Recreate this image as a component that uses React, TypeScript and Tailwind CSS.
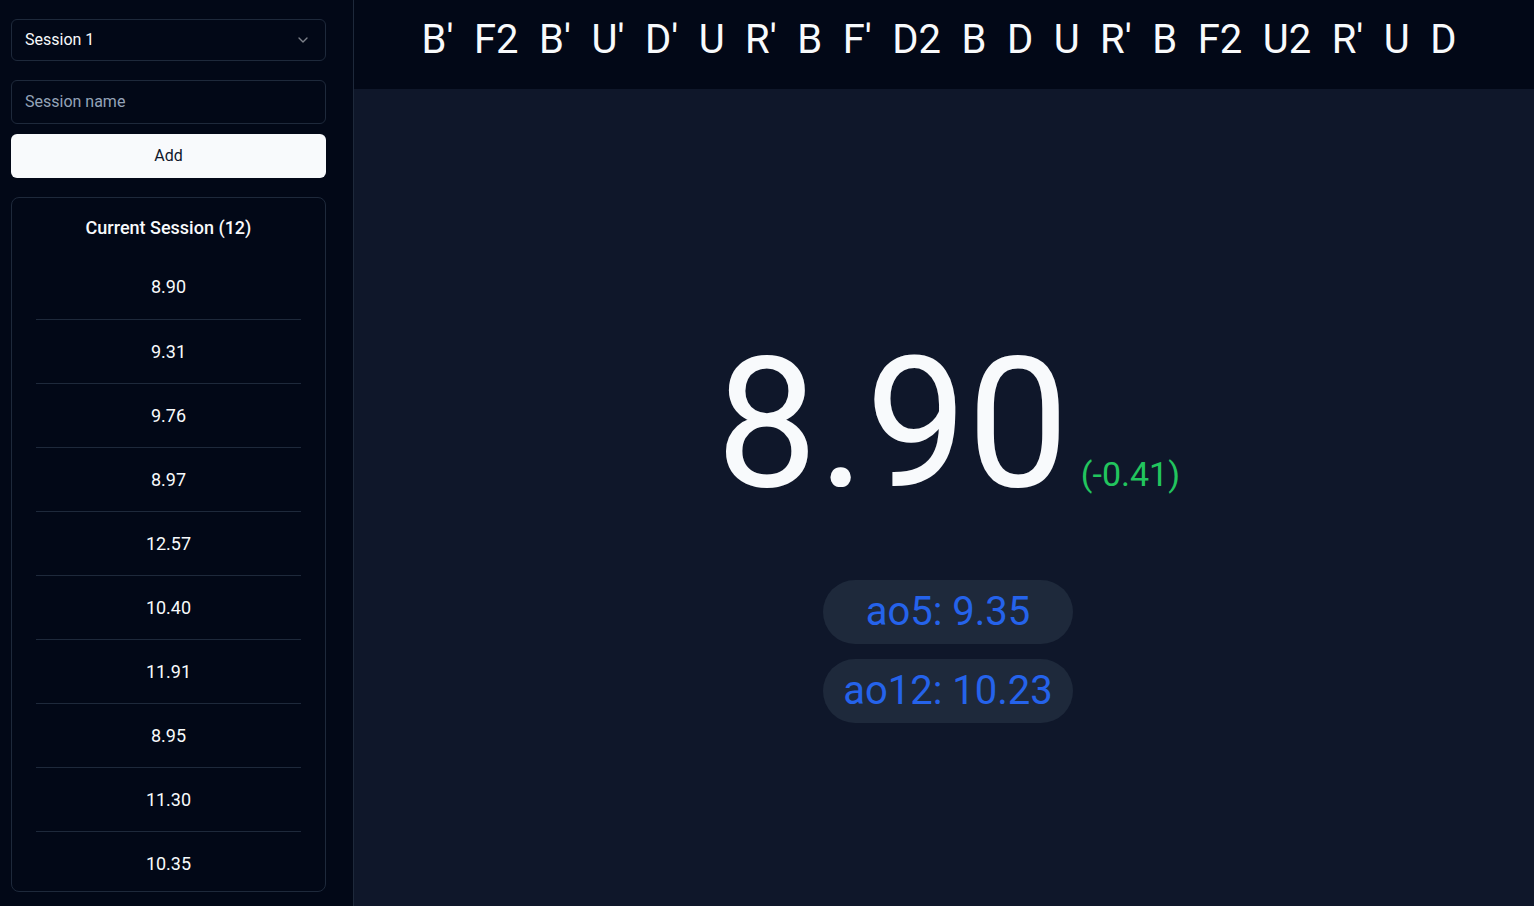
import { ChevronDown } from "lucide-react";

const scramble = "B' F2 B' U' D' U R' B F' D2 B D U R' B F2 U2 R' U D".split(" ");

const times = ["8.90", "9.31", "9.76", "8.97", "12.57", "10.40", "11.91", "8.95", "11.30", "10.35", "9.84", "10.12"];

export default function App() {
  return (
    <div
      className="flex h-[906px] w-full overflow-hidden bg-[#0f172a] text-[#f8fafc]"
      style={{ fontFamily: "Roboto, 'Liberation Sans', sans-serif" }}
    >
      {/* Sidebar */}
      <aside className="flex w-[354px] shrink-0 flex-col border-r border-[#1e293b] bg-[#020817] pl-[11px] pt-[19px] pb-[14px]">
        <div className="flex w-[315px] flex-col">
          <button className="flex h-[42px] items-center justify-between rounded-md border border-[#1e293b] pl-[13px] pr-[14px] text-base">
            <span>Session 1</span>
            <ChevronDown className="h-4 w-4 opacity-50" />
          </button>
          <div className="mt-[19px] flex h-[44px] items-center rounded-md border border-[#1e293b] px-[13px] text-base text-[#94a3b8]">
            Session name
          </div>
          <button className="mt-[10px] h-[44px] rounded-md bg-[#f8fafc] text-base text-[#0f172a]">
            Add
          </button>
        </div>

        {/* Current session card */}
        <div className="mt-[19px] flex min-h-0 w-[315px] flex-1 flex-col overflow-hidden rounded-lg border border-[#1e293b]">
          <h2 className="pt-4 text-center text-lg font-medium leading-7">
            Current Session ({times.length})
          </h2>
          <div className="mt-[13px] px-6">
            {times.slice(0, 10).map((t, i) => (
              <div
                key={i}
                className={`flex h-16 items-center justify-center text-lg ${
                  i === 0 ? "" : "border-t border-[#1e293b]"
                }`}
              >
                {t}
              </div>
            ))}
          </div>
        </div>
      </aside>

      {/* Main */}
      <main className="flex min-w-0 flex-1 flex-col">
        <header className="flex h-[89px] shrink-0 items-center justify-center gap-[20.5px] bg-[#020817] pr-[10px] pb-[10px] text-[40px] leading-[48px]">
          {scramble.map((m, i) => (
            <span key={i}>{m}</span>
          ))}
        </header>

        <div className="flex flex-1 flex-col items-center justify-center pt-[61px]">
          <div className="flex items-baseline gap-3 pl-2">
            <span className="text-[181px] leading-none">8.90</span>
            <span className="text-[34px] text-[#22c55e]">(-0.41)</span>
          </div>
          <div className="mt-[65px] ml-2 flex flex-col gap-[15px]">
            <div className="rounded-full bg-[#1e293b] px-5 py-3 text-center text-[40px] leading-10 text-[#2563eb]">
              ao5: 9.35
            </div>
            <div className="rounded-full bg-[#1e293b] px-5 py-3 text-center text-[40px] leading-10 text-[#2563eb]">
              ao12: 10.23
            </div>
          </div>
        </div>
      </main>
    </div>
  );
}
